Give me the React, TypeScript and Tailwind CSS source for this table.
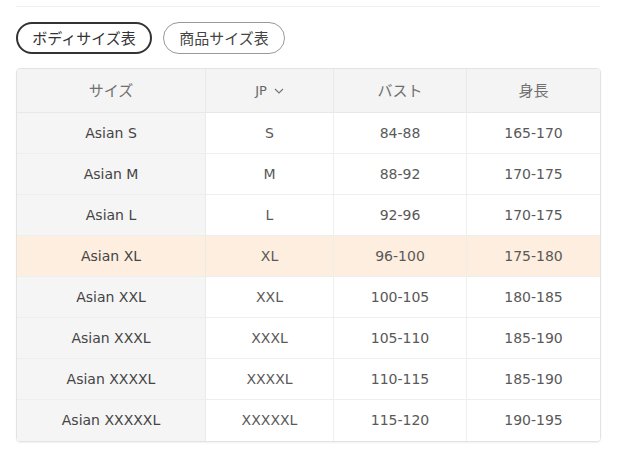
import React from "react";

const rows = [
  ["Asian S", "S", "84-88", "165-170"],
  ["Asian M", "M", "88-92", "170-175"],
  ["Asian L", "L", "92-96", "170-175"],
  ["Asian XL", "XL", "96-100", "175-180"],
  ["Asian XXL", "XXL", "100-105", "180-185"],
  ["Asian XXXL", "XXXL", "105-110", "185-190"],
  ["Asian XXXXL", "XXXXL", "110-115", "185-190"],
  ["Asian XXXXXL", "XXXXXL", "115-120", "190-195"],
];

const font = {
  fontFamily: '"DejaVu Sans", "Noto Sans CJK JP", sans-serif',
};

export default function App() {
  return (
    <div className="w-[640px] h-[457px] bg-white text-[#595959]" style={font}>
      <div className="pt-[6px] pl-[16px] pr-[40px]">
        <div className="h-px bg-[#eeeeee]" />
        <div className="flex gap-[11px] mt-[15px]">
          <button className="h-[32px] w-[136px] rounded-full border-2 border-[#333] text-[15px] text-[#333] flex items-center justify-center" style={{ fontFamily: '"Noto Sans CJK JP", sans-serif' }}>
            ボディサイズ表
          </button>
          <button className="h-[32px] w-[122px] rounded-full border border-[#999] text-[15px] text-[#444] flex items-center justify-center" style={{ fontFamily: '"Noto Sans CJK JP", sans-serif' }}>
            商品サイズ表
          </button>
        </div>
        <div className="mt-[14px] w-[585px] border border-[#e3e3e3] rounded-[4px] overflow-hidden shadow-[0_1px_2px_rgba(0,0,0,0.06)]">
          <div className="grid grid-cols-[189px_128px_133px_1fr] h-[44px] bg-[#f4f4f4] border-b border-[#e8e8e8] text-[15px] text-[#707070]" style={{ fontFamily: '"Noto Sans CJK JP", sans-serif' }}>
            <div className="flex items-center justify-center border-r border-[#e8e8e8]">サイズ</div>
            <div className="flex items-center justify-center border-r border-[#e8e8e8] gap-[7px]">
              <span style={font} className="text-[13px] text-[#666]">JP</span>
              <svg width="10" height="6" viewBox="0 0 10 6" fill="none" stroke="#777" strokeWidth="1.2">
                <path d="M1 1l4 4 4-4" />
              </svg>
            </div>
            <div className="flex items-center justify-center border-r border-[#e8e8e8]">バスト</div>
            <div className="flex items-center justify-center">身長</div>
          </div>
          {rows.map((r, i) => {
            const hl = i === 3;
            const last = i === rows.length - 1;
            return (
              <div
                key={i}
                className={`grid grid-cols-[189px_128px_133px_1fr] h-[41px] text-[14px] ${last ? "" : "border-b border-[#eeeeee]"} ${hl ? "bg-[#fdeedf]" : "bg-white"}`}
              >
                <div className={`flex items-center justify-center border-r border-[#eaeaea] text-[#444] ${hl ? "" : "bg-[#f5f5f5]"}`}>{r[0]}</div>
                <div className="flex items-center justify-center border-r border-[#eeeeee]">{r[1]}</div>
                <div className="flex items-center justify-center border-r border-[#eeeeee]">{r[2]}</div>
                <div className="flex items-center justify-center">{r[3]}</div>
              </div>
            );
          })}
        </div>
      </div>
    </div>
  );
}
